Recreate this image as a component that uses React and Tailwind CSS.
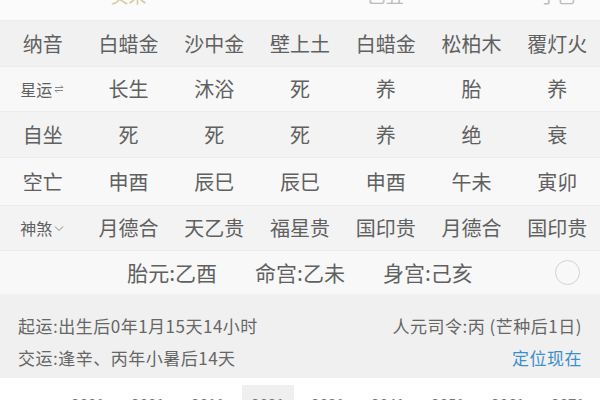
import React from 'react';

const rows = [
  { label: '纳音', cells: ['白蜡金', '沙中金', '壁上土', '白蜡金', '松柏木', '覆灯火'], h: 'h-[46px]', bg: 'bg-[#f1f1f1]' },
  { label: '星运', icon: 'swap', cells: ['长生', '沐浴', '死', '养', '胎', '养'], h: 'h-[45px]', bg: 'bg-[#f8f8f8]' },
  { label: '自坐', cells: ['死', '死', '死', '养', '绝', '衰'], h: 'h-[46px]', bg: 'bg-[#f3f3f3]' },
  { label: '空亡', cells: ['申酉', '辰巳', '辰巳', '申酉', '午未', '寅卯'], h: 'h-[48px]', bg: 'bg-[#f8f8f8]' },
  { label: '神煞', icon: 'down', cells: ['月德合', '天乙贵', '福星贵', '国印贵', '月德合', '国印贵'], h: 'h-[45px]', bg: 'bg-[#f3f3f3]' },
];

const years = ['2001', '2001', '2011', '2021', '2031', '2041', '2051', '2061', '2071'];

function RowLabel({ row }) {
  if (!row.icon) return <span>{row.label}</span>;
  return (
    <span className="flex items-center text-[16px]">
      {row.label}
      {row.icon === 'swap' ? (
        <svg width="12" height="12" viewBox="0 0 12 12" className="ml-[1px]" fill="none" stroke="#888" strokeWidth="1">
          <path d="M2 4.5h8L8 2.5M10 7.5H2l2 2" />
        </svg>
      ) : (
        <svg width="12" height="12" viewBox="0 0 12 12" className="ml-[1px]" fill="none" stroke="#888" strokeWidth="1">
          <path d="M2 4.5l4 4 4-4" />
        </svg>
      )}
    </span>
  );
}

export default function App() {
  return (
    <div className="w-[600px] h-[400px] overflow-hidden bg-[#fafafa] text-[#606060] font-['Noto_Sans_CJK_SC',sans-serif]">
      {/* cut-off header */}
      <div className="h-[20px] overflow-hidden bg-[#fbfbfb] grid grid-cols-7 text-[18px] leading-none">
        <div />
        <div className="-mt-[14px] text-center text-[#d8c9a0]">癸未</div>
        <div />
        <div />
        <div className="-mt-[14px] text-center text-[#bbb]">乙丑</div>
        <div />
        <div className="-mt-[14px] text-center text-[#bbb]">丁巳</div>
      </div>

      {rows.map((row, i) => (
        <div key={i} className={`grid grid-cols-7 items-center text-[20px] border-t border-[#ececec] ${row.h} ${row.bg}`}>
          <div className="flex justify-center">
            <RowLabel row={row} />
          </div>
          {row.cells.map((c, j) => (
            <div key={j} className="text-center">{c}</div>
          ))}
        </div>
      ))}

      <div className="h-[44px] bg-[#f8f8f8] border-t border-[#ececec] relative flex items-center justify-center gap-[38px] text-[21px]">
        <span>胎元:乙酉</span>
        <span>命宫:乙未</span>
        <span>身宫:己亥</span>
        <span className="absolute right-[20px] top-[9px] w-[25px] h-[25px] rounded-full border border-[#d2d2d2]" />
      </div>

      <div className="h-[84px] bg-[#f0f0f0] px-[18px] pt-[16px] text-[17px] leading-[32px] text-[#666]">
        <div className="flex justify-between">
          <span className="tracking-[0.5px]">起运:出生后0年1月15天14小时</span>
          <span className="tracking-[0.5px]">人元司令:丙 (芒种后1日)</span>
        </div>
        <div className="flex justify-between">
          <span className="tracking-[0.5px]">交运:逢辛、丙年小暑后14天</span>
          <span className="text-[#3d8fcc] tracking-[0.5px]">定位现在</span>
        </div>
      </div>

      <div className="h-[22px] bg-white flex pl-[62px] pt-[7px] gap-[8px] text-[15px] text-[#777] leading-none">
        {years.map((y, i) => (
          <span key={i} className={`w-[52px] text-center pt-[11px] ${i === 3 ? 'bg-[#efefef]' : ''}`}>{y}</span>
        ))}
      </div>
    </div>
  );
}
